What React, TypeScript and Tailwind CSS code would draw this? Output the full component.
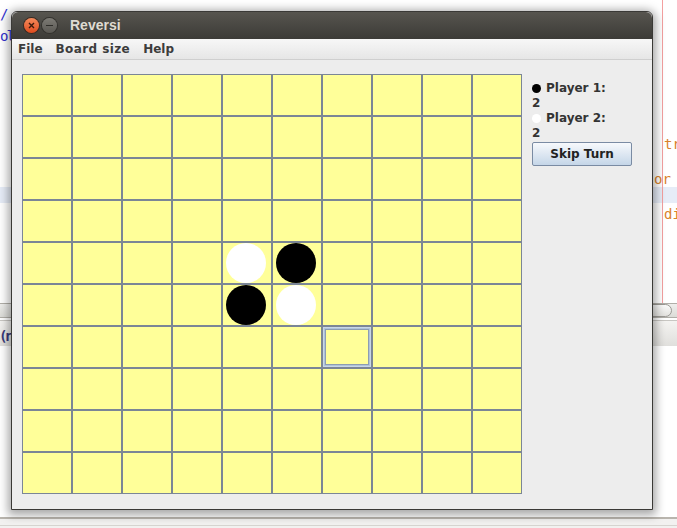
import React from "react";

const N = 10;
// board cells holding a piece: "b" black, "w" white
const PIECES: Record<string, "b" | "w"> = {
  "4-4": "w",
  "4-5": "b",
  "5-4": "b",
  "5-5": "w",
};
const SELECTED = "6-6";

function Cell({ r, c }: { r: number; c: number }) {
  const key = `${r}-${c}`;
  const piece = PIECES[key];
  const selected = key === SELECTED;
  return (
    <div
      className={
        "h-[42px] w-[50px] border border-[#7b8696] bg-[#ffff99] " +
        (selected ? "shadow-[inset_0_0_0_1px_#c9d7e6,inset_0_0_0_2px_#aec3da,inset_0_0_0_3px_#8d9db2]" : "")
      }
    >
      {piece && (
        <div
          className={
            "ml-[3px] h-[40px] w-[40px] rounded-full " +
            (piece === "b" ? "bg-black" : "bg-white")
          }
        />
      )}
    </div>
  );
}

function Board() {
  const cells = [];
  for (let r = 0; r < N; r++) for (let c = 0; c < N; c++) cells.push(<Cell key={`${r}-${c}`} r={r} c={c} />);
  return <div className="grid grid-cols-[repeat(10,50px)]">{cells}</div>;
}

function PlayerLine({ dot, label }: { dot: string; label: string }) {
  return (
    <div className="flex items-center gap-[5px]">
      <span className={"h-[9px] w-[9px] rounded-full " + dot} />
      <span>{label}</span>
    </div>
  );
}

function SidePanel() {
  return (
    <div className="flex w-[100px] flex-col pt-[7px] text-[12px] font-bold leading-[15px] text-[#333]">
      <PlayerLine dot="bg-black" label="Player 1:" />
      <div>2</div>
      <PlayerLine dot="bg-white" label="Player 2:" />
      <div>2</div>
      <button className="mt-[1px] h-[24px] w-[100px] rounded-[2px] border border-[#7a8ba3] bg-gradient-to-b from-[#f7f9fc] to-[#c5d6e8] text-[12px] font-bold text-[#222]">
        Skip Turn
      </button>
    </div>
  );
}

function TitleBar() {
  return (
    <div className="flex h-[27px] items-center rounded-t-[6px] bg-gradient-to-b from-[#57554f] to-[#3c3b37] pl-[12px]">
      <div className="flex h-[15px] w-[15px] items-center justify-center rounded-full bg-gradient-to-b from-[#f58a5a] to-[#df4a1c] shadow-[0_0_0_1px_#3a2a22]">
        <svg width="7" height="7" viewBox="0 0 7 7">
          <path d="M1 1L6 6M6 1L1 6" stroke="#3a1a0c" strokeWidth="1.4" />
        </svg>
      </div>
      <div className="ml-[3px] flex h-[15px] w-[15px] items-center justify-center rounded-full bg-gradient-to-b from-[#7d7b75] to-[#5a5853] shadow-[0_0_0_1px_#33322e]">
        <div className="h-[1.5px] w-[7px] bg-[#2e2d29]" />
      </div>
      <span className="ml-[13px] font-['Liberation_Sans',sans-serif] text-[14px] font-bold text-[#dfdbd2]">
        Reversi
      </span>
    </div>
  );
}

function MenuBar() {
  return (
    <div className="flex h-[21px] items-center gap-[13px] border-b border-[#cfcfcf] bg-gradient-to-b from-[#f7f7f7] to-[#e6e6e6] pl-[6px] text-[12px] font-bold text-[#3c3c3c]">
      <span>File</span>
      <span className="tracking-[0.4px]">Board size</span>
      <span>Help</span>
    </div>
  );
}

function Backdrop() {
  // IDE behind the window
  return (
    <>
      <div className="absolute left-0 right-0 top-[187px] h-[16px] bg-[#e6ecf7]" />
      <div className="absolute left-[662px] top-0 h-[305px] w-px bg-[#f4a0a0]" />
      <div className="absolute left-0 top-[3px] font-['DejaVu_Sans_Mono',monospace] text-[14px] leading-[22px] text-[#3030d0]">
        <div>/</div>
        <div className="tracking-[-2px]">ol</div>
      </div>
      <div className="absolute left-[664px] top-[134px] font-['DejaVu_Sans_Mono',monospace] text-[14px] text-[#d9822b]">tr</div>
      <div className="absolute left-[654px] top-[169px] font-['DejaVu_Sans_Mono',monospace] text-[14px] text-[#d9822b]">or</div>
      <div className="absolute left-[664px] top-[204px] font-['DejaVu_Sans_Mono',monospace] text-[14px] text-[#d9822b]">di</div>
      <div className="absolute left-0 right-0 top-[303px] h-[15px] border-y border-[#b0aea8] bg-gradient-to-b from-[#eeeeec] to-[#dcdcd8]" />
      <div className="absolute left-[640px] top-[304px] h-[13px] w-[32px] rounded-r-[7px] border border-[#9c9a95] bg-gradient-to-b from-[#fbfbfa] to-[#e2e1de]" />
      <div className="absolute left-0 right-0 top-[320px] h-[26px] border-t border-[#c8c6c2] bg-gradient-to-b from-[#f4f3f1] to-[#e0dfdc]" />
      <div className="absolute -left-[1px] top-[326px] font-['DejaVu_Sans_Mono',monospace] text-[14px] font-bold tracking-[-3px] text-[#3a3a7a]">
        (r
      </div>
      <div className="absolute bottom-0 left-0 right-0 h-[11px] border-t-2 border-[#b9b5ae] bg-[#f2f1f0]">
        <div className="mt-[6px] h-px bg-[#d6d4d0]" />
      </div>
    </>
  );
}

export default function App() {
  return (
    <div className="relative h-[528px] w-[677px] overflow-hidden bg-white font-['DejaVu_Sans',sans-serif]">
      <Backdrop />
      <div className="absolute left-[11px] top-[11px] flex h-[499px] w-[642px] flex-col rounded-t-[6px] border border-[#3a3936] bg-[#ededed] shadow-[0_2px_10px_3px_rgba(0,0,0,0.35)]">
        <TitleBar />
        <MenuBar />
        <div className="flex gap-[10px] pl-[10px] pt-[14px]">
          <Board />
          <SidePanel />
        </div>
      </div>
    </div>
  );
}
